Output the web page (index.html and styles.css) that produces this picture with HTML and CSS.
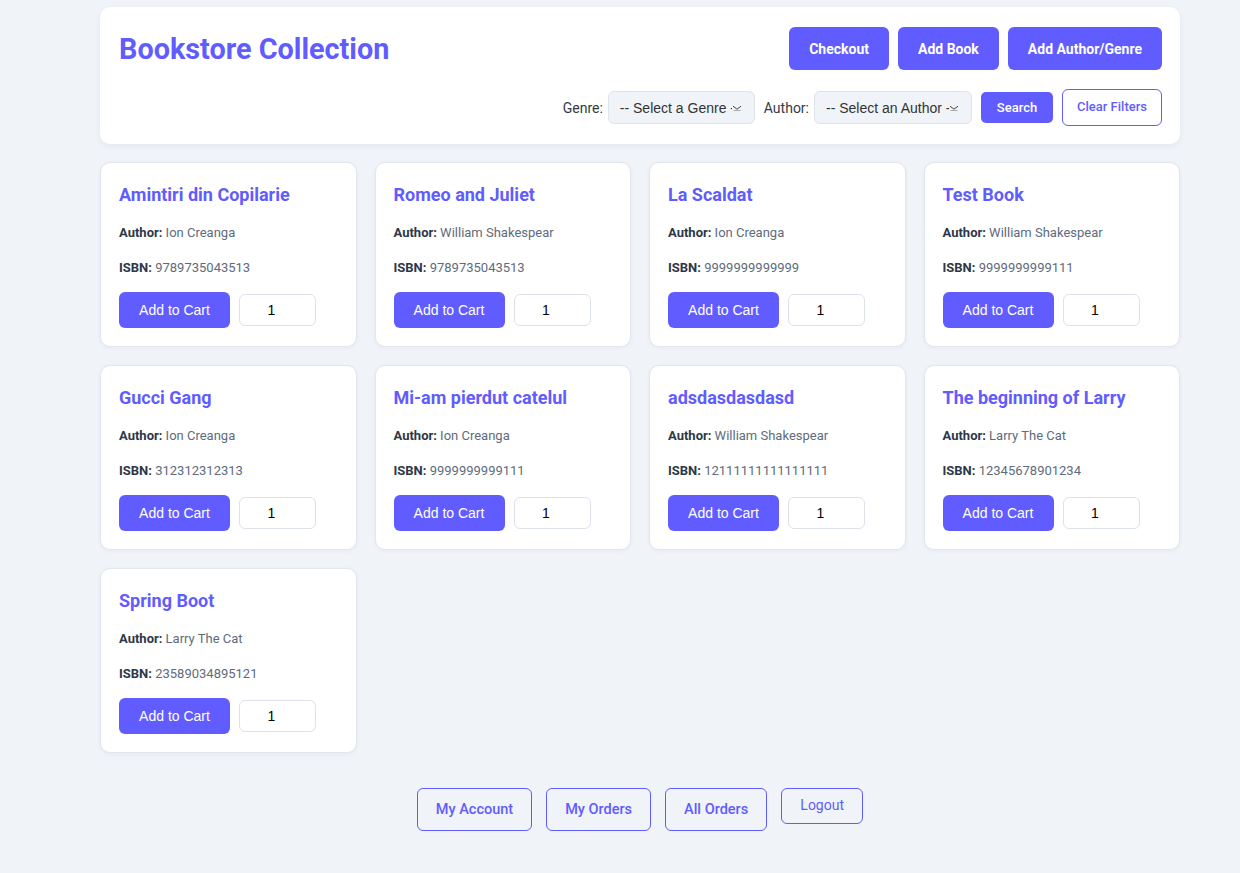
FILE: index.html
```html
<!DOCTYPE html>
<html lang="en">
<head>
<meta charset="utf-8">
<title>Bookstore Collection</title>
<link rel="stylesheet" href="styles.css">
</head>
<body>
<div class="page">
  <header class="header">
    <div class="header-top">
      <h1 class="title">Bookstore Collection</h1>
      <div class="actions">
        <button class="btn btn-primary">Checkout</button>
        <button class="btn btn-primary">Add Book</button>
        <button class="btn btn-primary">Add Author/Genre</button>
      </div>
    </div>
    <div class="filters">
      <label class="filter-label">Genre:</label>
      <select class="filter-select genre"><option>-- Select a Genre --</option></select>
      <label class="filter-label">Author:</label>
      <select class="filter-select author"><option>-- Select an Author --</option></select>
      <button class="btn-search">Search</button>
      <button class="btn-clear">Clear Filters</button>
    </div>
  </header>

  <main class="grid">
    <div class="card"><h3 class="book-title">Amintiri din Copilarie</h3><p class="meta"><b>Author:</b> Ion Creanga</p><p class="meta isbn"><b>ISBN:</b> 9789735043513</p><div class="cart-row"><button class="btn-cart">Add to Cart</button><input class="qty" type="number" value="1"></div></div>
    <div class="card"><h3 class="book-title">Romeo and Juliet</h3><p class="meta"><b>Author:</b> William Shakespear</p><p class="meta isbn"><b>ISBN:</b> 9789735043513</p><div class="cart-row"><button class="btn-cart">Add to Cart</button><input class="qty" type="number" value="1"></div></div>
    <div class="card"><h3 class="book-title">La Scaldat</h3><p class="meta"><b>Author:</b> Ion Creanga</p><p class="meta isbn"><b>ISBN:</b> 9999999999999</p><div class="cart-row"><button class="btn-cart">Add to Cart</button><input class="qty" type="number" value="1"></div></div>
    <div class="card"><h3 class="book-title">Test Book</h3><p class="meta"><b>Author:</b> William Shakespear</p><p class="meta isbn"><b>ISBN:</b> 9999999999111</p><div class="cart-row"><button class="btn-cart">Add to Cart</button><input class="qty" type="number" value="1"></div></div>
    <div class="card"><h3 class="book-title">Gucci Gang</h3><p class="meta"><b>Author:</b> Ion Creanga</p><p class="meta isbn"><b>ISBN:</b> 312312312313</p><div class="cart-row"><button class="btn-cart">Add to Cart</button><input class="qty" type="number" value="1"></div></div>
    <div class="card"><h3 class="book-title">Mi-am pierdut catelul</h3><p class="meta"><b>Author:</b> Ion Creanga</p><p class="meta isbn"><b>ISBN:</b> 9999999999111</p><div class="cart-row"><button class="btn-cart">Add to Cart</button><input class="qty" type="number" value="1"></div></div>
    <div class="card"><h3 class="book-title">adsdasdasdasd</h3><p class="meta"><b>Author:</b> William Shakespear</p><p class="meta isbn"><b>ISBN:</b> 12111111111111111</p><div class="cart-row"><button class="btn-cart">Add to Cart</button><input class="qty" type="number" value="1"></div></div>
    <div class="card"><h3 class="book-title">The beginning of Larry</h3><p class="meta"><b>Author:</b> Larry The Cat</p><p class="meta isbn"><b>ISBN:</b> 12345678901234</p><div class="cart-row"><button class="btn-cart">Add to Cart</button><input class="qty" type="number" value="1"></div></div>
    <div class="card"><h3 class="book-title">Spring Boot</h3><p class="meta"><b>Author:</b> Larry The Cat</p><p class="meta isbn"><b>ISBN:</b> 23589034895121</p><div class="cart-row"><button class="btn-cart">Add to Cart</button><input class="qty" type="number" value="1"></div></div>
  </main>

  <footer class="footer">
    <button class="btn-outline">My Account</button>
    <button class="btn-outline">My Orders</button>
    <button class="btn-outline">All Orders</button>
    <button class="btn-logout">Logout</button>
  </footer>
</div>
</body>
</html>
```

FILE: styles.css
```css
* { box-sizing: border-box; }

html, body {
  margin: 0;
  padding: 0;
  background: #f0f3f8;
  font-family: Roboto, "Liberation Sans", Arial, sans-serif;
  color: #2d3748;
}

.page {
  width: 1080px;
  margin-left: 100px;
  padding-top: 7px;
  padding-bottom: 42px;
}

.header {
  background: #ffffff;
  border-radius: 10px;
  padding: 20px 18px 18px 19px;
  box-shadow: 0 2px 6px rgba(30, 40, 80, 0.06);
}

.header-top {
  display: flex;
  justify-content: space-between;
  align-items: center;
}

.title {
  margin: 0;
  font-size: 28.8px;
  font-weight: 700;
  color: #615cff;
  line-height: 34px;
}

.actions {
  display: flex;
  gap: 9px;
}

.btn {
  border: none;
  border-radius: 6px;
  font-family: Roboto, sans-serif;
  font-size: 14px;
  font-weight: 700;
  height: 43px;
  padding: 0 20px;
  cursor: pointer;
}

.btn-primary {
  background: #615cff;
  color: #ffffff;
}

.filters {
  display: flex;
  justify-content: flex-end;
  align-items: center;
  margin-top: 19px;
}

.filter-label {
  font-size: 14px;
  color: #333a44;
  margin-right: 5px;
}

.filter-select {
  -webkit-appearance: none;
  appearance: none;
  height: 33px;
  background-color: #f0f3f8;
  background-image: url("data:image/svg+xml;utf8,<svg xmlns='http://www.w3.org/2000/svg' width='10' height='6' viewBox='0 0 10 6'><path d='M1 1.2 L5 4.2 L9 1.2' fill='none' stroke='%23444' stroke-width='1'/><path d='M1.5 5.5 H8.5' stroke='%23888' stroke-width='0.7'/></svg>");
  background-repeat: no-repeat;
  background-position: right 12px center;
  border: 1px solid #dfe3ea;
  border-radius: 6px;
  font-family: "Liberation Sans", Arial, sans-serif;
  font-size: 14px;
  color: #333333;
  padding: 0 22px 0 11px;
  margin-right: 9px;
  overflow: hidden;
  white-space: nowrap;
}

.filter-select.genre { width: 147px; }
.filter-select.author { width: 158px; }

.btn-search {
  height: 31px;
  width: 72px;
  border: none;
  border-radius: 5px;
  background: #615cff;
  color: #ffffff;
  font-family: Roboto, sans-serif;
  font-size: 13px;
  font-weight: 500;
  margin-right: 9px;
}

.btn-clear {
  height: 37px;
  width: 100px;
  border: 1px solid #615cff;
  border-radius: 6px;
  background: #ffffff;
  color: #615cff;
  font-family: Roboto, sans-serif;
  font-size: 13px;
  font-weight: 500;
  padding: 0 0 3px;
}

.grid {
  display: grid;
  grid-template-columns: repeat(4, 1fr);
  gap: 18px;
  margin-top: 18px;
}

.card {
  background: #ffffff;
  border: 1px solid #e2e6ed;
  border-radius: 10px;
  padding: 19px 18px 18px;
  box-shadow: 0 1px 4px rgba(30, 40, 80, 0.05);
}

.book-title {
  margin: 0;
  font-size: 18px;
  font-weight: 700;
  line-height: 25px;
  color: #615cff;
}

.meta {
  margin: 18px 0 0;
  font-size: 13px;
  line-height: 16px;
  color: #5e6b7c;
}

.meta b {
  font-weight: 700;
  color: #2d3748;
}

.meta.isbn { margin-top: 19px; }

.cart-row {
  display: flex;
  align-items: center;
  gap: 9px;
  margin-top: 16px;
}

.btn-cart {
  height: 36px;
  width: 111px;
  border: none;
  border-radius: 6px;
  background: #615cff;
  color: #ffffff;
  font-family: "Liberation Sans", Arial, sans-serif;
  font-size: 14px;
}

.qty {
  width: 77px;
  height: 32px;
  border: 1px solid #dde2ea;
  border-radius: 6px;
  text-align: center;
  font-family: "Liberation Sans", Arial, sans-serif;
  font-size: 14px;
  color: #000000;
  background: #ffffff;
  padding: 0 14px 0 2px;
  -moz-appearance: textfield;
}

.qty::-webkit-outer-spin-button,
.qty::-webkit-inner-spin-button {
  -webkit-appearance: none;
  margin: 0;
}

.footer {
  display: flex;
  justify-content: center;
  align-items: flex-start;
  gap: 14px;
  margin-top: 35px;
}

.btn-outline {
  height: 43px;
  padding: 0 18px;
  border: 1px solid #615cff;
  border-radius: 6px;
  background: transparent;
  color: #615cff;
  font-family: Roboto, sans-serif;
  font-size: 14.5px;
  font-weight: 500;
}

.btn-logout {
  height: 36px;
  width: 82px;
  border: 1px solid #615cff;
  border-radius: 6px;
  background: transparent;
  color: #615cff;
  font-family: Roboto, sans-serif;
  font-size: 14px;
  font-weight: 400;
  padding: 0 0 2px;
}
```
